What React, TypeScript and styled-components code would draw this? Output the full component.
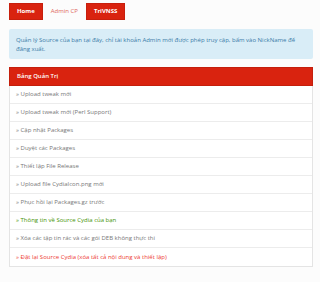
import styled, { createGlobalStyle } from 'styled-components';

const Global = createGlobalStyle`
    body {
        margin: 0;
        background: #fcfcfc;
        font-family: "Open Sans", "Liberation Sans", sans-serif;
        font-size: 6px;
        line-height: 1.43;
        color: #777777;
    }
`

const Page = styled.div`
    padding: 3px 7px 0 9px;
`

const Nav = styled.div`
    display: flex;
    align-items: center;
    gap: 8px;
    height: 17px;
    margin-bottom: 9px;
`

const NavButton = styled.a<{ $active?: boolean }>`
    display: flex;
    align-items: center;
    justify-content: center;
    height: 17px;
    padding: 0 ${props => props.$active ? '7px' : '0'};
    background: ${props => props.$active ? '#d9230f' : 'transparent'};
    border: ${props => props.$active ? '1px solid #c71f0d' : 'none'};
    box-sizing: border-box;
    color: ${props => props.$active ? '#ffffff' : '#e0685c'};
    font-weight: ${props => props.$active ? 700 : 400};
    text-decoration: none;
`

const Alert = styled.div`
    background: #d9edf7;
    color: #3a7ca8;
    border-radius: 2px;
    padding: 7px 7px 6px 7px;
    margin-bottom: 8px;
    line-height: 8.6px;
`

const Panel = styled.div`
    border: 1px solid #e4e4e4;
    border-top: none;
    background: #ffffff;
`

const PanelHeading = styled.div`
    background: #d9230f;
    border: 1px solid #c41f0c;
    margin: 0 -1px;
    color: #ffffff;
    font-weight: 600;
    height: 19px;
    padding: 0 7px;
    display: flex;
    align-items: center;
    box-sizing: border-box;
`

const Row = styled.div<{ $tone?: 'green' | 'red' }>`
    height: 18px;
    box-sizing: border-box;
    display: flex;
    align-items: center;
    padding: 0 6px;
    border-bottom: 1px solid #ececec;
    color: ${props => props.$tone === 'green' ? '#469408' : props.$tone === 'red' ? '#ee3b33' : '#777777'};

    &:last-child {
        border-bottom: none;
    }
`

const items: { text: string; tone?: 'green' | 'red' }[] = [
    { text: 'Upload tweak mới' },
    { text: 'Upload tweak mới (Perl Support)' },
    { text: 'Cập nhật Packages' },
    { text: 'Duyệt các Packages' },
    { text: 'Thiết lập File Release' },
    { text: 'Upload file CydiaIcon.png mới' },
    { text: 'Phục hồi lại Packages.gz trước' },
    { text: 'Thông tin về Source Cydia của bạn', tone: 'green' },
    { text: 'Xóa các tập tin rác và các gói DEB không thực thi' },
    { text: 'Đặt lại Source Cydia (xóa tất cả nội dung và thiết lập)', tone: 'red' },
]

export default function App() {
    return (
        <>
            <Global />
            <Page>
                <Nav>
                    <NavButton $active>Home</NavButton>
                    <NavButton>Admin CP</NavButton>
                    <NavButton $active>TriVNSS</NavButton>
                </Nav>
                <Alert>
                    Quản lý Source của bạn tại đây, chỉ tài khoản Admin mới được phép truy cập, bấm vào NickName để đăng xuất.
                </Alert>
                <Panel>
                    <PanelHeading>Bảng Quản Trị</PanelHeading>
                    {items.map(item => (
                        <Row key={item.text} $tone={item.tone}>» {item.text}</Row>
                    ))}
                </Panel>
            </Page>
        </>
    )
}
